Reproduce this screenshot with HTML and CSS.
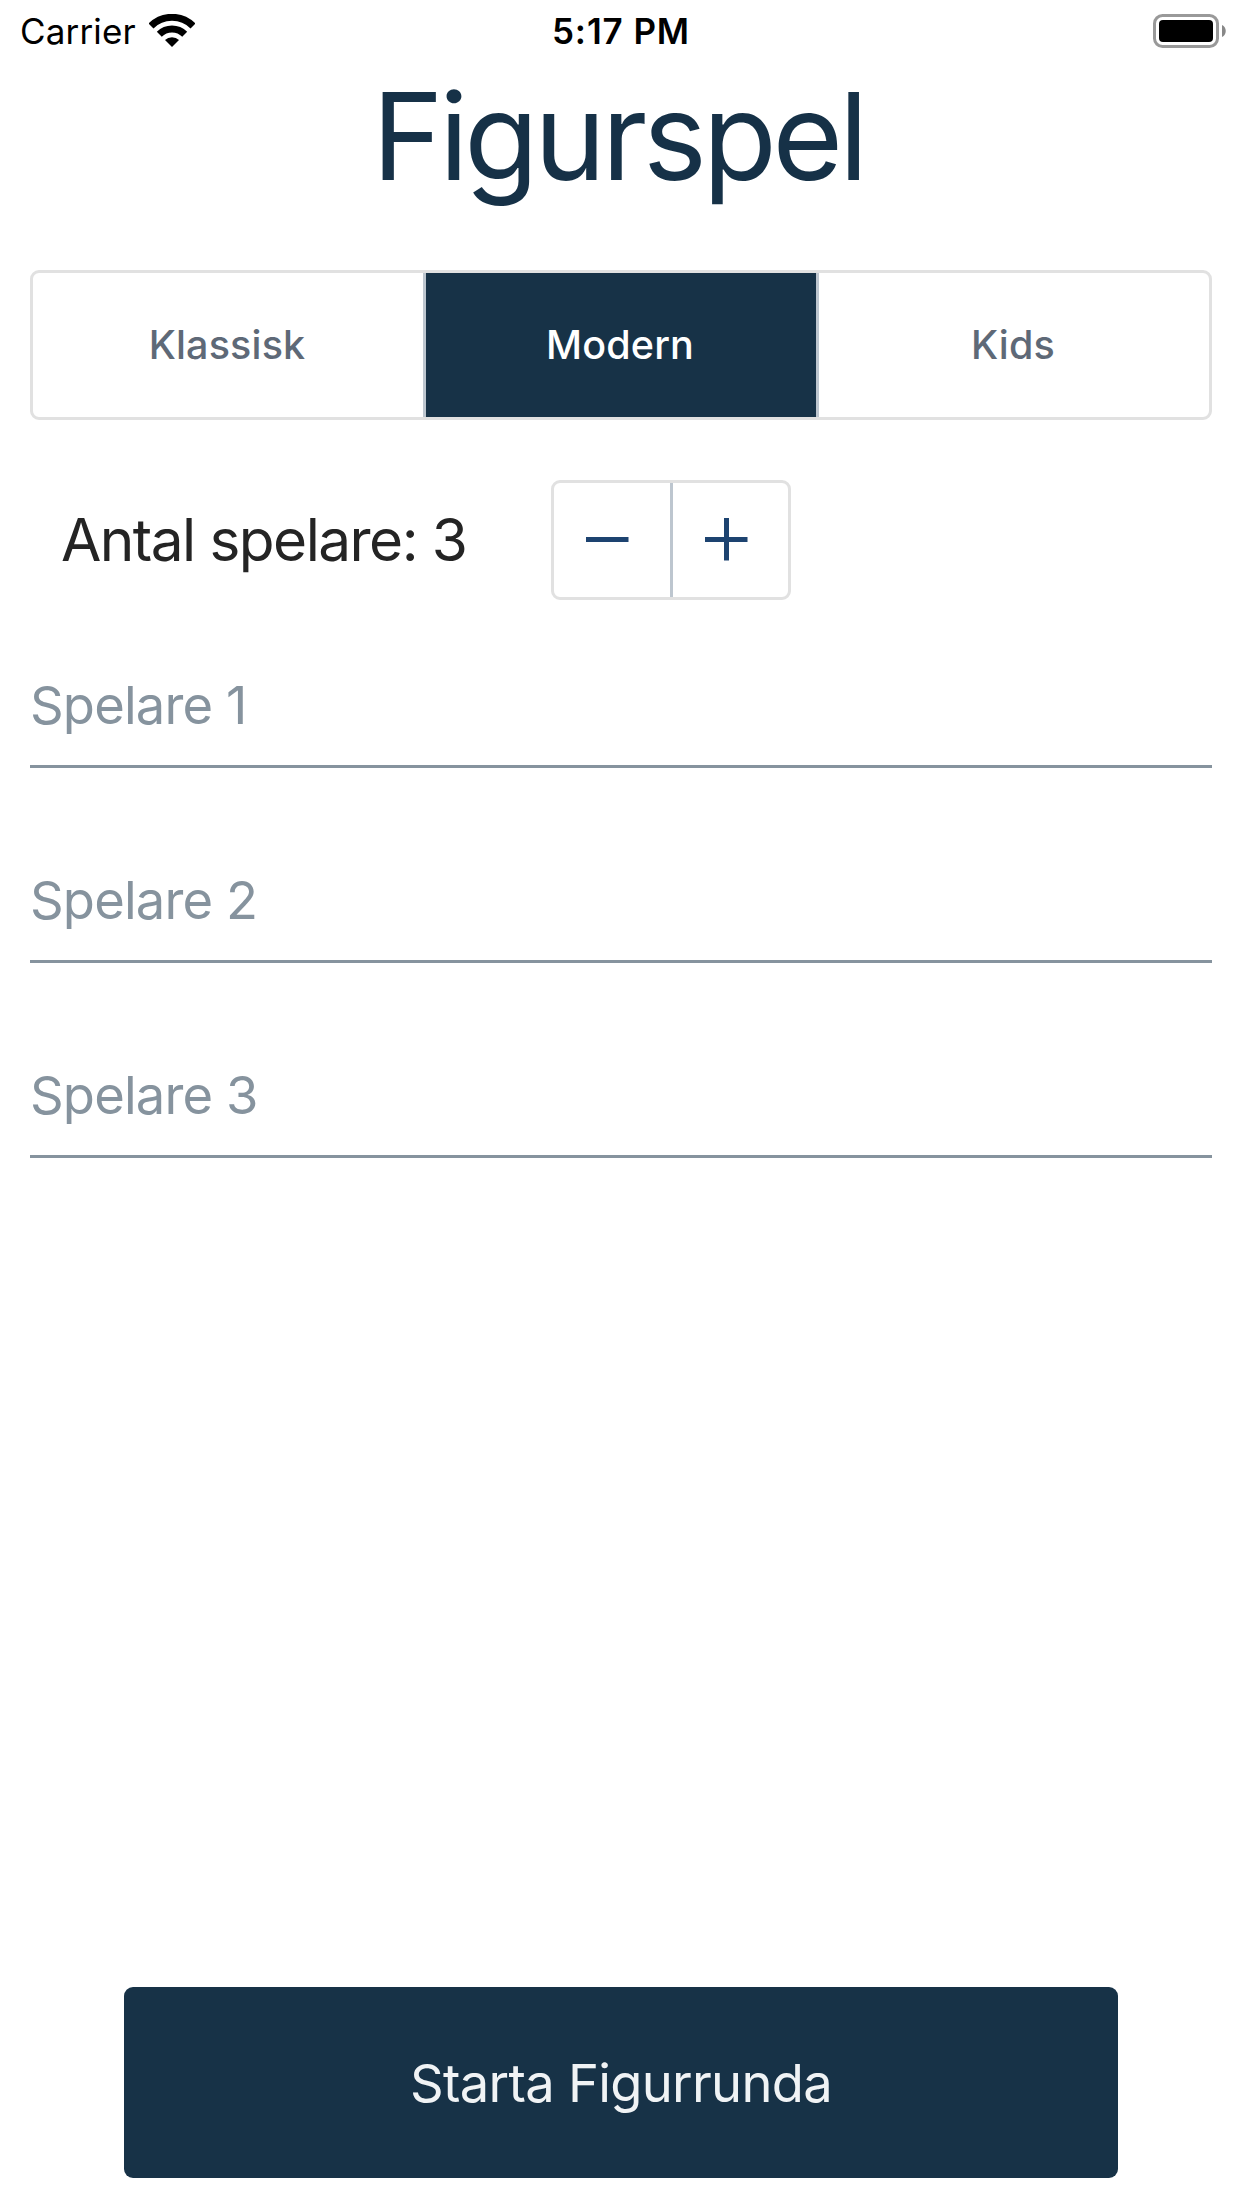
FILE: index.html
```html
<!DOCTYPE html>
<html lang="sv">
<head>
<meta charset="utf-8">
<title>Figurspel</title>
<link rel="stylesheet" href="styles.css">
</head>
<body>
<header class="status">
  <div class="carrier"><span class="carrier-name">Carrier</span>
    <svg class="wifi" width="46" height="34" viewBox="0 0 46 34"><g fill="none" stroke="#000" stroke-width="7"><path d="M2 12A29.7 29.7 0 0 1 44 12"/><path d="M10.3 20.3A18 18 0 0 1 35.7 20.3"/></g><path d="M23 33L16 26A10 10 0 0 1 30 26Z"/></svg>
  </div>
  <span class="time">5:17 PM</span>
  <svg class="battery" width="74" height="34" viewBox="0 0 74 34"><rect x="1.5" y="1.5" width="63" height="31" rx="8" fill="none" stroke="#999" stroke-width="3"/><rect x="6" y="6" width="54" height="22" rx="4"/><path d="M69 11v12c5-2 5-10 0-12z" fill="#888"/></svg>
</header>
<main>
  <h1 class="title">Figurspel</h1>
  <nav class="tabs"><button class="tab">Klassisk</button><button class="tab active">Modern</button><button class="tab">Kids</button></nav>
  <section class="count"><span class="count-label">Antal spelare: 3</span>
    <div class="stepper"><button class="step"><svg width="43" height="43"><path d="M0 21.5H42.5"/></svg></button><button class="step"><svg width="43" height="43"><path d="M0 21.5H42.5M21.5 0V42.5"/></svg></button></div>
  </section>
  <section class="players"><div class="player">Spelare 1</div><div class="player">Spelare 2</div><div class="player">Spelare 3</div></section>
</main>
<button class="start">Starta Figurrunda</button>
</body>
</html>
```
FILE: styles.css
```css
* { box-sizing: border-box; }
body { margin: 0; height: 2208px; background: #fff; font-family: Inter, "Liberation Sans", sans-serif; display: flex; flex-direction: column; }
button { font: inherit; border: 0; padding: 0; background: none; display: flex; align-items: center; justify-content: center; }
svg { display: block; flex: none; }
span { white-space: nowrap; }
.status { height: 60px; display: grid; grid-template-columns: 1fr auto 1fr; align-items: center; padding: 0 15px 0 20px; font-size: 35px; line-height: 62px; }
.carrier { display: flex; gap: 13px; align-items: center; }
.carrier-name { letter-spacing: 0.15px; }
.time { font-weight: 600; letter-spacing: 0.9px; margin-right: 5px; }
.battery { justify-self: end; }
.title { margin: 0; height: 210px; font-size: 121px; line-height: 153px; font-weight: 400; letter-spacing: -4.2px; padding-right: 6px; text-align: center; color: #163147; }
.tabs { height: 150px; margin: 0 30px; display: flex; border: 3px solid #e1e1e1; border-radius: 9px; }
.tab { flex: 1; padding: 0 2px 0 0; font-size: 39.5px; font-weight: 500; letter-spacing: 0.15px; color: #5e6977; }
.tab + .tab { border-left: 3px solid #bdc6cf; }
.tab.active { background: #173247; color: #fff; }
.count { height: 120px; margin-top: 60px; padding-left: 61px; display: flex; align-items: center; justify-content: space-between; width: 791px; font-size: 58.5px; letter-spacing: -1.55px; line-height: 70px; color: #242424; }
.count-label { padding-bottom: 1px; }
.stepper { width: 240px; height: 120px; display: flex; border: 3px solid #e1e1e1; border-radius: 9px; }
.step { flex: 1; padding: 0 9px 2px 0; }
.step + .step { border-left: 3px solid #bdc6cf; padding: 0 8px 2px 1px; }
.step path { fill: none; stroke: #1d4370; stroke-width: 5; }
.players { margin: 45px 30px 0; display: grid; gap: 72px; }
.player { height: 123px; border-bottom: 3px solid #86939e; font-size: 52.5px; line-height: 121px; letter-spacing: -0.85px; color: #86939e; }
.start { width: 994px; height: 191px; margin: auto auto 30px; background: #173247; border-radius: 9px; font-size: 52.5px; letter-spacing: -0.7px; color: #f0f3f5; }
```
